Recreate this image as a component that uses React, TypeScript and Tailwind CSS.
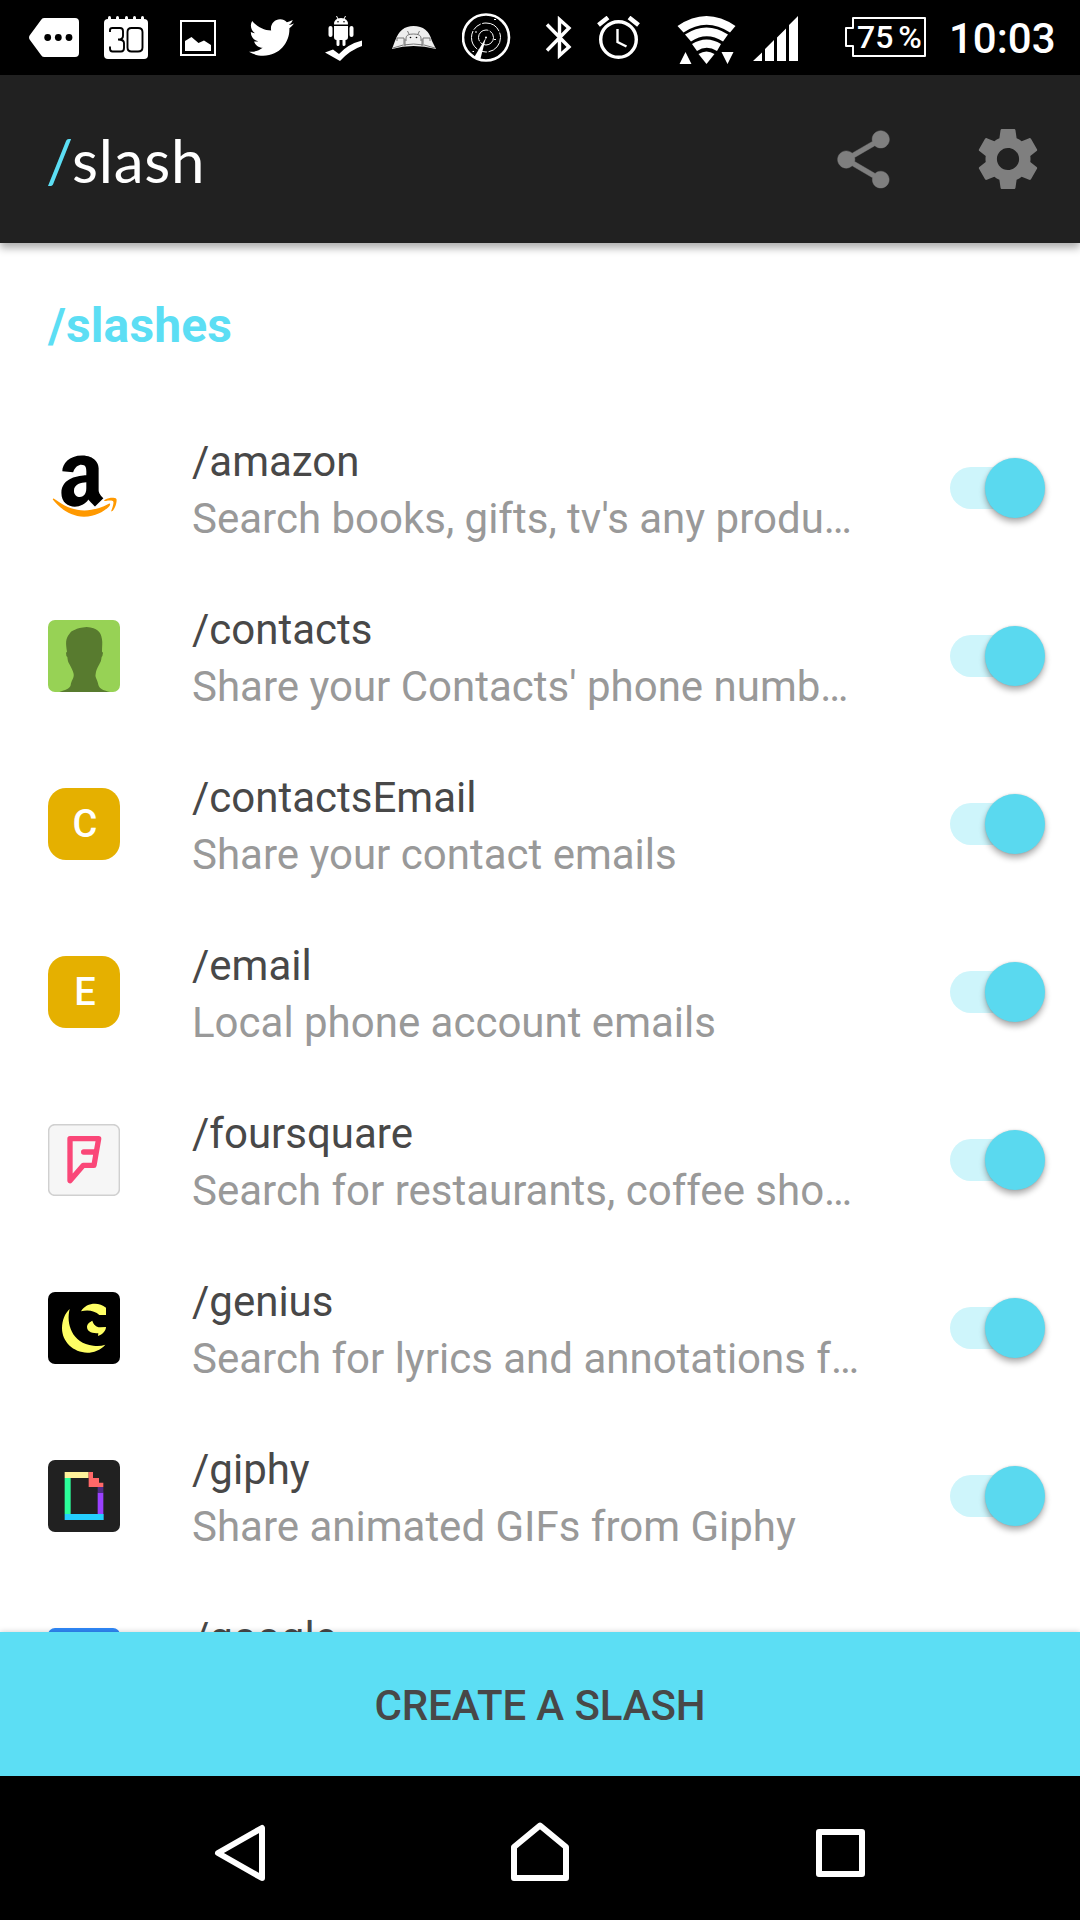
import type { ReactNode } from "react";
import { FaTwitter } from "react-icons/fa";

function StatusBar() {
  return (
    <div className="flex h-[75px] shrink-0 items-start bg-black text-white">
      <svg className="ml-[29px] mt-[18px] h-[39px] w-[50px] shrink-0" viewBox="29 18 50 39">
        <path d="M44 18H75Q79 18 79 22V53Q79 57 75 57H44Q42 57 41 55L29.6 39.5Q28.5 37.5 29.6 35.500L41 20Q42 18 44 18Z" fill="#fff" />
        <circle cx="47.700" cy="37.500" r="3.400" />
        <circle cx="58.300" cy="37.500" r="3.400" />
        <circle cx="69" cy="37.500" r="3.400" />
      </svg>
      <div className="ml-[25px] mt-4 flex h-[43px] w-11 shrink-0 flex-col">
        <div className="flex h-[3px] justify-between px-1">
          <i className="w-[3px] rounded-t bg-white" />
          <i className="w-[3px] rounded-t bg-white" />
          <i className="w-[3px] rounded-t bg-white" />
          <i className="w-[3px] rounded-t bg-white" />
          <i className="w-[3px] rounded-t bg-white" />
        </div>
        <svg className="h-10 w-11 rounded-[4px] bg-white" viewBox="104 19 44 40" fill="none" stroke="#000" strokeWidth="1.900">
          <path d="M110 32V30Q110 28 112.500 28H120Q123 28 123 31V36Q123 39.500 118 39.500Q124 39.500 124 43V48Q124 51.500 121 51.500H112.500Q110 51.500 110 48.500V46.500M131.500 28H138Q142.500 28 142.500 32V47.500Q142.500 51.500 138 51.500H131.500Q127.500 51.500 127.500 47.500V32Q127.500 28 131.500 28Z" />
        </svg>
      </div>
      <svg className="ml-8 mt-5 h-9 w-9 shrink-0" viewBox="180 20 36 36">
        <path d="M181 21H215V55H181Z" fill="none" stroke="#fff" strokeWidth="2" />
        <path d="M185 51V41L191.500 37L198.500 43L204 40.500L211 45V51Z" fill="#fff" />
      </svg>
      <FaTwitter className="ml-[33px] mt-[15px] h-[45px] w-[45px] shrink-0" />
      <svg className="ml-[31px] mt-[15px] h-[46px] w-[37px] shrink-0" viewBox="325 15 37 46" fill="#fff">
        <path d="M334 24.500Q334 18 341 18Q348 18 348 24.500ZM334 26H348V37Q348 40 345.500 40V45Q345 46 343.800 46Q342.500 46 342.500 44.500V40H339.500V44.500Q339.500 46 338 46Q336.500 46 336.500 44.500V40Q334 40 334 37Z" />
        <rect x="328.500" y="26" width="4" height="11" rx="2" />
        <rect x="349.500" y="26" width="4" height="11" rx="2" />
        <path d="M336.500 16L338 19M345.500 16L344 19" stroke="#fff" />
        <path d="M325 52.500L333 49.500L339 54Q348 44 362 40.500V46Q350 50 340 61Z" />
        <circle cx="338" cy="21.700" r=".8" fill="#000" />
        <circle cx="344" cy="21.700" r=".8" fill="#000" />
      </svg>
      <svg className="ml-[29px] mt-[25px] h-[26px] w-[46px] shrink-0" viewBox="391 25 46 26">
        <path d="M395 41Q400 26 413.500 26Q428 26 432 41L436 49Q413 43 392 49Z" fill="#eee" />
        <g fill="none" stroke="#777">
          <path d="M406 41V38Q406 34 413.500 34Q421 34 421 38V41M409 34L407.500 31M418 34L419.500 31M405 46V39M422 46V39M397 41V38H404V44M430 41V38H423V44" />
          <path d="M393 48Q413 40 435 48" />
        </g>
        <circle cx="410.500" cy="37.500" r=".8" />
        <circle cx="416.500" cy="37.500" r=".8" />
      </svg>
      <svg className="ml-[25px] mt-[13px] h-[49px] w-[49px] shrink-0" viewBox="462 13 49 49" fill="none" stroke="#fff">
        <circle cx="486" cy="37.500" r="23" strokeWidth="2.600" />
        <circle cx="486" cy="37.500" r="14.500" strokeDasharray="20 1.500 9 1.500" />
        <circle cx="486" cy="37.500" r="7.500" strokeDasharray="18 1.500" />
        <path d="M486 37.500L474 57.500L480 60.500Z" fill="#fff" stroke="none" />
        <circle cx="486" cy="37.500" r="1" fill="#fff" stroke="none" />
        <path d="M475 32H477M494 39.500H496M472.500 51.500H474M494 19.500H496" />
      </svg>
      <svg className="ml-[34px] mt-4 h-[43px] w-[27px] shrink-0" viewBox="545.500 16 27 43" fill="none" stroke="#fff" strokeWidth="3.400">
        <path d="M547.500 24.500L569.500 47L560 55.500V19.500L569.500 28L547.500 50.500" />
      </svg>
      <svg className="ml-[25px] mt-4 h-[43px] w-[43px] shrink-0" viewBox="597.500 16 43 43" fill="none" stroke="#fff">
        <circle cx="619" cy="39.500" r="17.800" strokeWidth="3.400" />
        <path d="M618 29V42L627 46.500" strokeWidth="2.400" />
        <path d="M599 25L608.500 17.500M639 25L629.500 17.500" strokeWidth="4.500" />
      </svg>
      <svg className="ml-[37px] mt-[15px] h-[50px] w-[59px] shrink-0" viewBox="677.500 15 59 50" fill="#fff">
        <path d="M678 26Q707 6 736 26L730.500 32.500Q707 17 684 32.500Z" />
        <path d="M685.500 34.500Q707 20.500 728.500 34.500L723.500 41.500Q707 31 691.500 41.500Z" />
        <path d="M692.500 44Q707 35 721.500 44L717.500 51Q707 44.500 697.500 51Z" />
        <path d="M699 54Q707 49 715 54L707 64Z" />
        <path d="M686 52L692 64H680ZM728 64L722 52H734Z" />
      </svg>
      <svg className="ml-[17px] mt-4 h-[45px] w-[45px] shrink-0" viewBox="753 16 45 45" fill="#fff">
        <path d="M753 61L762 52.500V61ZM765 61V49L774 40V61ZM777 61V37.500L786 28.500V61ZM789 61V25L798 16V61Z" />
      </svg>
      <div className="relative ml-[47px] mt-[17px] h-10 w-[81px] shrink-0">
        <svg className="h-10 w-[81px]" viewBox="845 17 81 40" fill="none" stroke="#fff" strokeWidth="2">
          <path d="M853 18H925V56H853V46H846V28H853Z" strokeLinejoin="round" />
        </svg>
        <span className="absolute left-[12px] top-[2px] whitespace-nowrap text-[32px] font-medium leading-[36px] [word-spacing:-3px]">75 %</span>
      </div>
      <span className="ml-[23px] mt-[14px] whitespace-nowrap text-[42px] font-medium leading-[50px]">10:03</span>
    </div>
  );
}

function AppBar() {
  return (
    <header className="relative z-10 flex h-[168px] shrink-0 items-center bg-[#212121] pl-[46px] shadow-[0_5px_8px_rgba(0,0,0,0.32)]">
      <h1 className="flex-1 pt-[2px] font-[Lato] text-[60px] leading-[72px] tracking-[0.8px] text-white">
        <span className="mr-[-2px] text-[#5cdef4]">/</span>slash
      </h1>
      <svg className="mr-[74px] h-[69px] w-[69px]" viewBox="0 0 24 24" fill="#7f7f7f">
        <path d="M18 16.080c-.76 0-1.440.3-1.960.77L8.910 12.700c.05-.23.09-.46.09-.7s-.04-.47-.09-.7l7.050-4.110c.54.5 1.250.81 2.040.81 1.660 0 3-1.340 3-3s-1.340-3-3-3-3 1.340-3 3c0 .24.04.47.09.7L8.040 9.810C7.500 9.310 6.790 9 6 9c-1.660 0-3 1.340-3 3s1.340 3 3 3c.79 0 1.500-.31 2.040-.81l7.120 4.160c-.05.21-.08.43-.08.65 0 1.610 1.310 2.920 2.920 2.920s2.920-1.310 2.920-2.920-1.310-2.920-2.920-2.920z" stroke="#7f7f7f" strokeWidth=".15" />
      </svg>
      <svg className="mr-9 h-[72px] w-[72px]" viewBox="0 0 24 24" fill="#7f7f7f">
        <path d="M19.430 12.980c.04-.32.07-.64.07-.98s-.03-.66-.07-.98l2.110-1.650c.19-.15.24-.42.12-.64l-2-3.460c-.12-.22-.39-.3-.61-.22l-2.490 1c-.52-.4-1.080-.73-1.690-.98l-.38-2.650C14.460 2.180 14.250 2 14 2h-4c-.25 0-.46.18-.49.42l-.38 2.650c-.61.25-1.170.59-1.690.98l-2.490-1c-.23-.09-.49 0-.61.22l-2 3.460c-.13.22-.07.49.12.64l2.110 1.650c-.04.32-.07.65-.07.98s.03.66.07.98l-2.110 1.650c-.19.15-.24.42-.12.64l2 3.460c.12.22.39.3.61.22l2.490-1c.52.4 1.080.73 1.690.98l.38 2.650c.03.24.24.42.49.42h4c.25 0 .46-.18.49-.42l.38-2.650c.61-.25 1.170-.59 1.690-.98l2.490 1c.23.09.49 0 .61-.22l2-3.460c.12-.22.07-.49-.12-.64l-2.110-1.650zM12 15.700c-2.040 0-3.700-1.660-3.700-3.700s1.660-3.700 3.700-3.700 3.700 1.660 3.700 3.700-1.660 3.700-3.700 3.700z" />
      </svg>
    </header>
  );
}

function AmazonIcon() {
  return (
    <svg className="h-[72px] w-[72px]" viewBox="48 452 72 72">
      <path
        transform="translate(48.500 450.700) scale(.147 .151)"
        d="M257.200 162.700c-48.700 1.800-169.500 15.500-169.500 117.500 0 109.500 138.300 114 183.500 43.200 6.500 10.200 35.400 37.500 45.300 46.800l56.800-56S341 288.900 341 261.400V114.300C341 89 316.500 32 228.700 32 140.700 32 94 87 94 136.300l73.500 6.800c16.300-49.500 54.200-49.500 54.200-49.500 40.700-.1 35.500 29.800 35.500 69.100zm0 86.800c0 80-84.200 68-84.200 17.200 0-47.200 50.500-56.700 84.200-57.800v40.600z"
      />
      <path
        fill="#f90"
        transform="translate(51.800 437.500) scale(.147 .165)"
        d="M393.200 413c-7.700 10-70 67-174.500 67S34.200 408.500 9.700 379c-6.800-7.700 1-11.300 5.500-8.300C88.500 415.200 203 488.500 387.700 401c7.500-3.700 13.300 2 5.500 12zm39.800 2.200c-6.500 15.800-16 26.800-21.200 31-5.500 4.500-9.500 2.700-6.500-3.800s19.300-46.500 12.700-55c-6.500-8.300-37-4.300-48-3.200-10.800 1-13 2-14-.3-2.300-5.700 21.700-15.500 37.500-17.500 15.700-1.800 41-.8 46 5.700 3.700 5.100 0 27.100-6.500 43.100z"
      />
    </svg>
  );
}

function ContactIcon() {
  return (
    <svg className="h-[72px] w-[72px] rounded-[7px] bg-[#97d255]" viewBox="54 570 216 216">
      <path
        fill="#587b2f"
        d="M88 786C105 780 119 777 122 766C123 752 133 745 131 732Q130 724 118 702C114 697 113 690 112 681Q108 679 108 668L111 665C107 640 106 627 118 612C122 604 127 602 135 599Q145 593 170 591Q195 594 202 601C211 607 214 617 216 628C218 638 216 650 216 665L219 668Q218 678 215 681Q214 695 208 703Q198 720 197 732C194 742 203 750 205 764C208 777 222 781 240 786Z"
      />
    </svg>
  );
}

function LetterIcon({ letter }: { letter: string }) {
  return (
    <div className="flex h-[72px] w-[72px] items-center justify-center rounded-[18px] bg-[#e5b000] pb-px pl-[2px] text-[38px] font-medium leading-none text-white">
      {letter}
    </div>
  );
}

function FoursquareIcon() {
  return (
    <svg className="h-[72px] w-[72px]" viewBox="54 42 216 216" fill="none">
      <rect x="56" y="44" width="212" height="212" rx="18" fill="#f6f6f6" stroke="#d0d0d0" strokeWidth="4.500" />
      <path d="M120 212V86H206L192 166H160ZM161 126H197" stroke="#fa4778" strokeWidth="16" strokeLinejoin="round" strokeLinecap="round" />
    </svg>
  );
}

function GeniusIcon() {
  return (
    <svg className="h-[72px] w-[72px] rounded-[7px] bg-black" viewBox="54 546 216 216" fill="#ffff64">
      <path d="M119 597C108 640 125 700 190 707C203 709 215 708 226 704C212 720 190 728 172 728C130 728 96 695 96 655C96 630 105 610 119 597Z" />
      <path d="M153 604C162 588 178 581 195 581C207 581 218 585 228 593V615H208C195 603 175 598 153 604Z" />
      <path d="M171 651C171 642 179 636 187 632C190 643 198 651 210 652L228 651C228 662 218 673 204 678L205 670C190 670 171 667 171 651Z" />
    </svg>
  );
}

function GiphyIcon() {
  return (
    <svg className="h-[72px] w-[72px] rounded-[7px] bg-[#212121]" viewBox="54 60 216 216">
      <path fill="#fff29b" d="M104 96H176V114H104Z" />
      <path fill="#2bff9a" d="M104 114H122V222H104Z" />
      <path fill="#24cfff" d="M104 222H221V240H104Z" />
      <path fill="#9a40ff" d="M203 158H220V222H203Z" />
      <path fill="#4f2b85" d="M203 141H220V159H203Z" />
      <path fill="#ff6868" d="M176 96H189V114H207V128H220V141H176Z" />
    </svg>
  );
}

function Toggle() {
  return (
    <div className="relative h-[60px] w-24">
      <div className="mt-[9px] h-[42px] w-[88px] rounded-full bg-[#cef5fb]" />
      <div className="absolute right-px top-0 h-[60px] w-[60px] rounded-full bg-[#5ad9ef] shadow-[0_4px_6px_rgba(0,0,0,0.32),0_0_2px_rgba(0,0,0,0.15)]" />
    </div>
  );
}

const slashes: { name: string; text: string; icon: ReactNode }[] = [
  { name: "/amazon", text: "Search books, gifts, tv's any produ…", icon: <AmazonIcon /> },
  { name: "/contacts", text: "Share your Contacts' phone numb…", icon: <ContactIcon /> },
  { name: "/contactsEmail", text: "Share your contact emails", icon: <LetterIcon letter="C" /> },
  { name: "/email", text: "Local phone account emails", icon: <LetterIcon letter="E" /> },
  { name: "/foursquare", text: "Search for restaurants, coffee sho…", icon: <FoursquareIcon /> },
  { name: "/genius", text: "Search for lyrics and annotations f…", icon: <GeniusIcon /> },
  { name: "/giphy", text: "Share animated GIFs from Giphy", icon: <GiphyIcon /> },
  { name: "/google", text: "", icon: <div className="h-[72px] w-[72px] rounded-[7px] bg-[#2f88f8]" /> },
];

export default function App() {
  return (
    <div className="flex h-[1920px] w-[1080px] flex-col overflow-hidden bg-white font-[Roboto,sans-serif]">
      <StatusBar />
      <AppBar />
      <main className="h-[1389px] shrink-0 overflow-hidden">
        <h2 className="flex h-[161px] items-center pl-12 pt-1 text-[48px] font-bold leading-[56px] tracking-[0.15px] text-[#5cdef4]">/slashes</h2>
        {slashes.map((s) => (
          <div key={s.name} className="flex h-[168px] items-center pl-12 pr-[34px]">
            {s.icon}
            <div className="ml-[72px] h-[102px] flex-1 whitespace-nowrap text-[42px] leading-[49px]">
              <div className="text-[#484848]">{s.name}</div>
              <div className="mt-2 text-[#999]">{s.text}</div>
            </div>
            <Toggle />
          </div>
        ))}
      </main>
      <button className="relative h-36 shrink-0 bg-[#5cdef4] pt-[2px] text-[42px] font-medium tracking-[-0.1px] text-[#484848] shadow-[0_0_6px_rgba(0,0,0,0.2)]">CREATE A SLASH</button>
      <nav className="relative flex h-36 shrink-0 items-start bg-black">
        <svg className="ml-[214px] mt-[48px] h-[58px] w-[52px]" viewBox="214 1824 52 58" fill="none" stroke="#fff" strokeWidth="6" strokeLinejoin="round">
          <path d="M218 1853L262 1828V1878Z" />
        </svg>
        <svg className="ml-[244px] mt-[46px] h-[60px] w-[60px]" viewBox="510 1822 60 60" fill="none" stroke="#fff" strokeWidth="6" strokeLinejoin="round">
          <path d="M514 1878V1847L540 1825.500L566 1847V1878Z" />
        </svg>
        <svg className="ml-[246px] mt-[53px] h-[48px] w-[49px]" viewBox="816 1829 49 48" fill="none" stroke="#fff" strokeWidth="6" strokeLinejoin="round">
          <path d="M819 1832H862V1874H819Z" />
        </svg>
      </nav>
    </div>
  );
}
